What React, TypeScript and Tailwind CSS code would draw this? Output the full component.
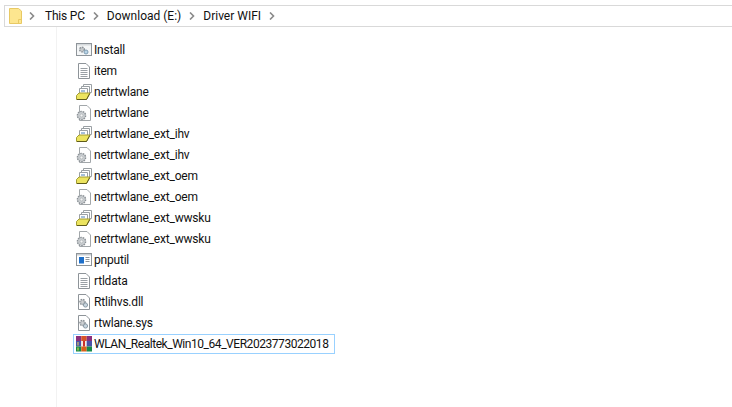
import React from "react";

type IconKind = "setup" | "text" | "inf" | "gear" | "exe" | "dll" | "rar";

const files: { name: string; icon: IconKind }[] = [
  { name: "Install", icon: "setup" },
  { name: "item", icon: "text" },
  { name: "netrtwlane", icon: "inf" },
  { name: "netrtwlane", icon: "gear" },
  { name: "netrtwlane_ext_ihv", icon: "inf" },
  { name: "netrtwlane_ext_ihv", icon: "gear" },
  { name: "netrtwlane_ext_oem", icon: "inf" },
  { name: "netrtwlane_ext_oem", icon: "gear" },
  { name: "netrtwlane_ext_wwsku", icon: "inf" },
  { name: "netrtwlane_ext_wwsku", icon: "gear" },
  { name: "pnputil", icon: "exe" },
  { name: "rtldata", icon: "text" },
  { name: "Rtlihvs.dll", icon: "dll" },
  { name: "rtwlane.sys", icon: "dll" },
  { name: "WLAN_Realtek_Win10_64_VER2023773022018", icon: "rar" },
];

const Page = () => (
  <path d="M2.5 .5H10L13.5 4V15.5H2.5Z" fill="#fff" stroke="#8e9499" />
);

const Cog = ({ x, y, r = 3 }: { x: number; y: number; r?: number }) => (
  <g>
    <circle cx={x} cy={y} r={r} fill="#c9cdd0" stroke="#8b9196" strokeDasharray="1.6 .9" strokeWidth={1.4} />
    <circle cx={x} cy={y} r={r * 0.35} fill="#f4f4f4" stroke="#9aa0a5" strokeWidth={0.5} />
  </g>
);

const FileIcon = ({ kind }: { kind: IconKind }) => {
  return (
    <svg width="16" height="16" viewBox="0 0 16 16" className="shrink-0">
      {kind === "setup" && (
        <g>
          <rect x=".5" y="1.5" width="15" height="12" fill="#f4f6f7" stroke="#8e9499" />
          <rect x="1" y="2" width="14" height="1.5" fill="#d5d9dc" />
          <Cog x={6} y={7.5} r={2.4} />
          <circle cx="10" cy="10" r="2" fill="#b9d4e6" stroke="#7f9db3" />
        </g>
      )}
      {kind === "text" && (
        <g>
          <Page />
          <path d="M4.5 5.5H11.5M4.5 7.5H11.5M4.5 9.5H11.5M4.5 11.5H11.5M4.5 13.5H11.5" stroke="#9aa0a5" />
        </g>
      )}
      {kind === "inf" && (
        <g>
          <path d="M7.5 .5H15.5V8.5H7.5Z" fill="#fff" stroke="#9aa0a4" />
          <path d="M5.5 2.5H13.5V9.5H5.5Z" fill="#fff" stroke="#9aa0a4" />
          <path d="M3.5 4.5H11.5V10H3.5Z" fill="#fff" stroke="#9aa0a4" />
          <path d="M5 7H9" stroke="#4a7fb5" />
          <path d="M.5 11.5L3 9H14L10.5 15.5H.5Z" fill="#ece45f" stroke="#a39d34" />
          <path d="M1 15.5H10.5L13.8 9.5" fill="none" stroke="#5f5b1c" />
        </g>
      )}
      {kind === "gear" && (
        <g>
          <path d="M3.5 .5H11L14.5 4V15.5H3.5Z" fill="#fff" stroke="#a2a7aa" />
          <Cog x={5.5} y={10.5} r={4.1} />
        </g>
      )}
      {kind === "exe" && (
        <g>
          <rect x=".5" y="1.5" width="15" height="12" fill="#fff" stroke="#8e9499" />
          <rect x="1" y="2" width="14" height="1.5" fill="#c9ced2" />
          <rect x="3" y="5" width="5" height="6.5" fill="#1e6fc9" />
          <path d="M9.5 5.5H13.5M9.5 7.5H13.5M9.5 9.5H13.5" stroke="#8f959a" />
        </g>
      )}
      {kind === "dll" && (
        <g>
          <Page />
          <Cog x={6.5} y={8} r={2.6} />
          <circle cx="9.5" cy="11" r="2.1" fill="#c6d4de" stroke="#8b9aa5" />
        </g>
      )}
      {kind === "rar" && (
        <g>
          <rect x="0" y="0" width="5.3" height="5" fill="#8a2f7c" />
          <rect x="5.3" y="0" width="5.4" height="5" fill="#d6532a" />
          <rect x="10.7" y="0" width="5.3" height="5" fill="#8a2f7c" />
          <rect x="0" y="5" width="5.3" height="5.5" fill="#4a53a8" />
          <rect x="5.3" y="5" width="5.4" height="5.5" fill="#f3ece2" />
          <rect x="10.7" y="5" width="5.3" height="5.5" fill="#4a53a8" />
          <rect x="0" y="10.5" width="5.3" height="5" fill="#178a48" />
          <rect x="5.3" y="10.5" width="5.4" height="5" fill="#d9601a" />
          <rect x="10.7" y="10.5" width="5.3" height="5" fill="#178a48" />
          <rect x="7" y="5" width="2" height="5.5" fill="#c9302a" />
          <rect x="1.5" y="6" width="1" height="3.5" fill="#f4d94e" />
          <rect x="1.5" y="11.5" width="1" height="3" fill="#f4d94e" />
        </g>
      )}
    </svg>
  );
};

const Chevron = () => (
  <svg width="6" height="8" viewBox="0 0 6 8" className="shrink-0">
    <path d="M1 .5L4.5 4L1 7.5" fill="none" stroke="#8a8a8a" strokeWidth="1.6" />
  </svg>
);

const FolderIcon = () => (
  <svg width="13" height="16" viewBox="0 0 13 16" className="shrink-0">
    <path d="M.5 .5H9.5L12.5 3V15.5H.5Z" fill="#fde68f" stroke="#e8c964" />
    <path d="M9.5 15.5V11.5H12.5" fill="none" stroke="#e8c964" />
  </svg>
);

export default function App() {
  return (
    <div className="w-[732px] h-[407px] bg-white overflow-hidden flex flex-col font-['Roboto','Open_Sans',sans-serif] text-[12px] text-[#111]">
      {/* Address bar */}
      <div className="mt-[5px] ml-1 h-[22px] border-y border-l border-[#d9d9d9] flex items-center pl-[4px]">
        <FolderIcon />
        <div className="ml-[7px]"><Chevron /></div>
        <span className="ml-[10px] tracking-[-0.2px]">This PC</span>
        <div className="ml-[8px]"><Chevron /></div>
        <span className="ml-[8px]">Download (E:)</span>
        <div className="ml-[8px]"><Chevron /></div>
        <span className="ml-[8px]">Driver WIFI</span>
        <div className="ml-[8px]"><Chevron /></div>
      </div>

      <div className="flex flex-1">
        {/* Navigation pane edge */}
        <div className="w-[57px] border-r border-[#f2f2f2]" />

        {/* File list */}
        <div className="pt-3 pl-[16px] flex flex-col items-start">
          {files.map((f, i) => {
            const selected = i === files.length - 1;
            return (
              <div
                key={i}
                className={
                  selected
                    ? "h-[20px] mt-px flex items-center gap-[2px] pl-[2px] pr-[6px] border border-[#99d1ff] tracking-[-0.45px]"
                    : "h-[21px] flex items-center gap-[2px] pl-[3px] tracking-[-0.2px]"
                }
              >
                <FileIcon kind={f.icon} />
                <span className="whitespace-nowrap">{f.name}</span>
              </div>
            );
          })}
        </div>
      </div>
    </div>
  );
}
